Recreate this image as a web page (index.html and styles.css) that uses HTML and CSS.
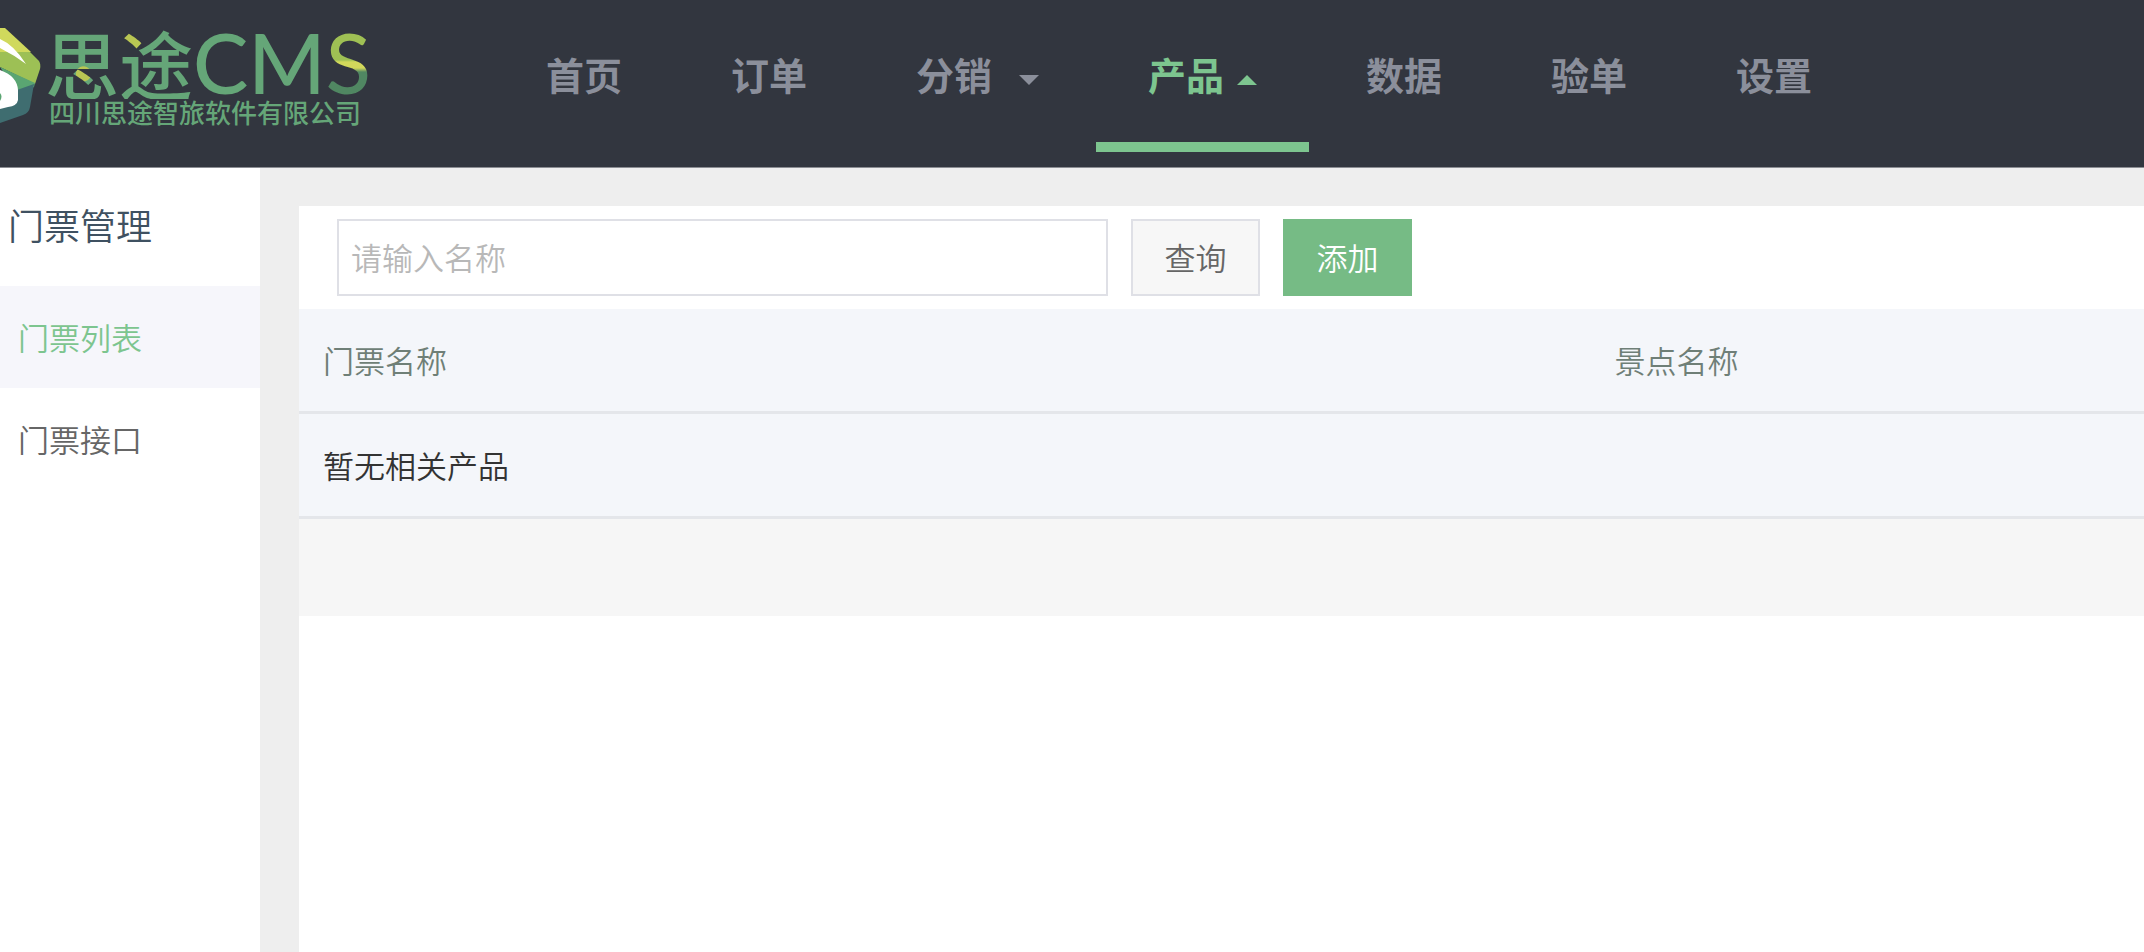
FILE: index.html
```html
<!DOCTYPE html>
<html lang="zh-CN">
<head>
    <meta charset="UTF-8">
    <meta name="viewport" content="width=device-width, initial-scale=1.0">
    <title>门票列表</title>
    <link rel="stylesheet" href="styles.css">
</head>
<body>

    <header class="header">
        <a class="logo" href="#">
            <svg class="logo-mark" width="41" height="98" viewBox="0 0 41 98" aria-hidden="true">
                <path d="M0 1H5L31 25L0 26Z" fill="#d0d95c"/>
                <path d="M0 25H30L39 34Q41 37 40 42L35 57L0 40Z" fill="#9dc055"/>
                <path d="M0 40L35 56L34 60L18 68Z" fill="#5aa572"/>
                <path d="M17 63L34 57L30 80Q29 86 23 88L0 96V76Z" fill="#3f6d70"/>
                <path d="M0 12Q14 18 26 37Q14 28 0 21Z" fill="#fff"/>
                <path d="M0 43Q17 49 18 63V73Q17 79 8 80L0 82Z" fill="#fff"/>
                <path d="M0 66Q3 69 0 74Z" fill="#5aa572"/>
            </svg>
            <span class="logo-text">
                <span class="logo-name"><span class="logo-si">思</span><span class="logo-tu">途</span><span class="logo-cms">CM<span class="logo-s">S</span></span></span>
                <span class="logo-company">四川思途智旅软件有限公司</span>
            </span>
        </a>
        <nav class="nav">
            <a href="#">首页</a>
            <a href="#">订单</a>
            <a href="#">分销<span class="caret-down"></span></a>
            <a href="#" class="active">产品<span class="caret-up"></span></a>
            <a href="#">数据</a>
            <a href="#">验单</a>
            <a href="#">设置</a>
        </nav>
    </header>

    <div class="container">
        <aside class="sidebar">
            <h2>门票管理</h2>
            <a href="#" class="active">门票列表</a>
            <a href="#">门票接口</a>
        </aside>

        <main class="content">
            <form class="search-bar">
                <input type="text" class="search-input" placeholder="请输入名称" aria-label="请输入名称">
                <button type="button" class="btn">查询</button>
                <button type="button" class="btn btn-add">添加</button>
            </form>
            <table class="list">
                <thead>
                    <tr>
                        <th class="col-name">门票名称</th>
                        <th>景点名称</th>
                    </tr>
                </thead>
                <tbody>
                    <tr>
                        <td colspan="2">暂无相关产品</td>
                    </tr>
                </tbody>
            </table>
            <div class="list-footer"></div>
        </main>
    </div>

</body>
</html>
```
FILE: styles.css
```css
* {
    box-sizing: border-box;
}
body {
    margin: 0;
    min-height: 100vh;
    display: flex;
    flex-direction: column;
    font-family: "Noto Sans CJK SC", sans-serif;
    font-size: 31px;
    font-weight: 350;
    color: #333;
    background: #eee;
}
a {
    text-decoration: none;
}

/* header */
.header {
    display: flex;
    align-items: flex-start;
    height: 168px;
    background: #32363f;
    border-bottom: 1px solid #8b8d93;
    overflow: hidden;
}
.logo {
    display: flex;
    align-items: flex-end;
    flex: none;
    width: 494px;
    padding-top: 25px;
    color: #65a678;
}
.logo-mark {
    flex: none;
}
.logo-text {
    display: flex;
    flex-direction: column;
    padding-left: 4px;
}
.logo-name {
    display: flex;
    align-items: center;
    height: 74px;
    font-size: 74px;
    line-height: 74px;
    font-weight: 500;
}
.logo-cms {
    font-family: Lato, sans-serif;
    font-size: 83px;
}
.logo-si,
.logo-tu,
.logo-s {
    color: transparent;
    -webkit-background-clip: text;
    background-clip: text;
}
.logo-si {
    background-image: radial-gradient(circle at 52% 66%, #b9c653 7px, #65a678 8px);
}
.logo-tu {
    background-image: radial-gradient(circle at 14% 22%, #b9c653 12px, #65a678 13px);
}
.logo-s {
    background-image: linear-gradient(#9fc054 48%, #d3d95b 50%, #d3d95b 56%, #508762 60%);
}
.logo-company {
    padding-left: 4px;
    font-size: 26px;
    line-height: 26px;
    font-weight: 500;
}
.nav {
    display: flex;
    gap: 5px;
}
.nav a {
    display: flex;
    align-items: center;
    height: 152px;
    padding: 6px 52px 0;
    border-bottom: 10px solid transparent;
    font-size: 38px;
    line-height: 56px;
    font-weight: 700;
    color: #8b8f9b;
}
.nav a.active {
    color: #7dc58f;
    border-bottom-color: #7dc58f;
}
.caret-down,
.caret-up {
    margin-top: 12px;
    border-left: 10px solid transparent;
    border-right: 10px solid transparent;
}
.caret-down {
    margin-left: 27px;
    border-top: 10px solid #8b8f9b;
}
.caret-up {
    margin-left: 13px;
    border-bottom: 10px solid #7dc58f;
}

/* body */
.container {
    display: flex;
    flex: 1;
}
.sidebar {
    flex: none;
    width: 260px;
    background: #fff;
}
.sidebar h2 {
    margin: 0;
    padding: 0 0 6px 8px;
    font-size: 36px;
    line-height: 112px;
    font-weight: 350;
    color: #3f5161;
}
.sidebar a {
    display: block;
    padding-left: 18px;
    line-height: 102px;
    color: #666;
}
.sidebar a.active {
    color: #7dc58f;
    background: #f6f6fb;
}
.content {
    flex: 1;
    margin: 38px 0 0 39px;
    background: #fff;
}
.search-bar {
    display: flex;
    gap: 23px;
    padding: 13px 38px;
}
.search-input,
.btn {
    height: 77px;
    border: 2px solid #dfe0e6;
    font: inherit;
}
.search-input {
    width: 771px;
    padding: 0 12px 2px;
    background: #fff;
}
.search-input::placeholder {
    color: #b8b8b8;
}
.btn {
    width: 129px;
    padding: 0 0 2px;
    color: #666;
    background: #f7f7f7;
}
.btn-add {
    color: #fff;
    background: #76bb85;
    border-color: #76bb85;
}
.list {
    width: 100%;
    border-spacing: 0;
    table-layout: fixed;
    background: #f4f6fa;
}
.list th,
.list td {
    height: 105px;
    padding: 0 24px 2px;
    border-bottom: 3px solid #e4e6ea;
    text-align: left;
    font-weight: 350;
}
.list th {
    color: #6f7f77;
}
.list .col-name {
    width: 70%;
}
.list-footer {
    height: 97px;
    background: #f6f6f6;
}
```
